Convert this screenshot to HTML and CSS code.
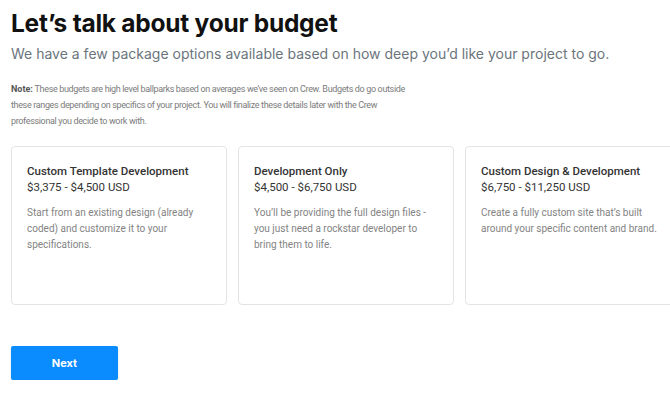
FILE: index.html
```html
<!DOCTYPE html>
<html>
<head>
<meta charset="utf-8">
<link rel="stylesheet" href="styles.css">
</head>
<body>
<div class="page">
  <h1 class="title">Let’s talk about your budget</h1>
  <p class="subtitle">We have a few package options available based on how deep you’d like your project to go.</p>
  <p class="note"><b>Note:</b> These budgets are high level ballparks based on averages we’ve seen on Crew. Budgets do go outside these ranges depending on specifics of your project. You will finalize these details later with the Crew professional you decide to work with.</p>
  <div class="cards">
    <div class="card">
      <div class="card-title">Custom Template Development</div>
      <div class="card-price">$3,375 - $4,500 USD</div>
      <div class="card-desc">Start from an existing design (already coded) and customize it to your specifications.</div>
    </div>
    <div class="card">
      <div class="card-title">Development Only</div>
      <div class="card-price">$4,500 - $6,750 USD</div>
      <div class="card-desc">You’ll be providing the full design files - you just need a rockstar developer to bring them to life.</div>
    </div>
    <div class="card">
      <div class="card-title">Custom Design &amp; Development</div>
      <div class="card-price">$6,750 - $11,250 USD</div>
      <div class="card-desc">Create a fully custom site that’s built around your specific content and brand.</div>
    </div>
  </div>
  <button class="next">Next</button>
</div>
</body>
</html>
```
FILE: styles.css
```css
html, body {
  margin: 0;
  padding: 0;
  background: #fff;
  overflow: hidden;
}
body {
  font-family: Inter, "Liberation Sans", sans-serif;
  width: 670px;
  height: 400px;
}
.page {
  padding: 8px 0 0 11px;
  width: 659px;
  overflow: hidden;
}
.title {
  margin: 0;
  font-size: 24.5px;
  line-height: 30px;
  font-weight: 700;
  color: #111;
  letter-spacing: -0.25px;
}
.subtitle {
  margin: 6px 0 0;
  font-size: 14px;
  line-height: 20px;
  color: #6b757c;
}
.note {
  margin: 17px 0 0;
  width: 396px;
  font-family: Roboto, "Liberation Sans", sans-serif;
  font-size: 9px;
  line-height: 16px;
  color: #7b7b7b;
  letter-spacing: -0.35px;
}
.note b {
  color: #555;
  font-weight: 700;
  letter-spacing: 0;
}
.cards {
  display: flex;
  gap: 11px;
  margin-top: 17px;
  width: 700px;
}
.card {
  flex: 0 0 216px;
  height: 159px;
  box-sizing: border-box;
  border: 1px solid #e4e4e4;
  border-radius: 4px;
  padding: 16px 15px 15px;
  font-family: Roboto, "Liberation Sans", sans-serif;
}
.card-title {
  font-size: 11.5px;
  line-height: 16px;
  font-weight: 500;
  color: #333;
}
.card-price {
  font-size: 11.5px;
  line-height: 16px;
  color: #333;
}
.card-desc {
  margin-top: 10px;
  font-size: 10px;
  line-height: 16px;
  color: #838383;
}
.next {
  display: block;
  margin-top: 41px;
  width: 107px;
  height: 34px;
  border: none;
  border-radius: 2px;
  background: #0a8cff;
  color: #fff;
  font-family: Inter, "Liberation Sans", sans-serif;
  font-size: 11px;
  font-weight: 700;
  box-shadow: 0 1px 2px rgba(0,0,0,0.15);
}
```
